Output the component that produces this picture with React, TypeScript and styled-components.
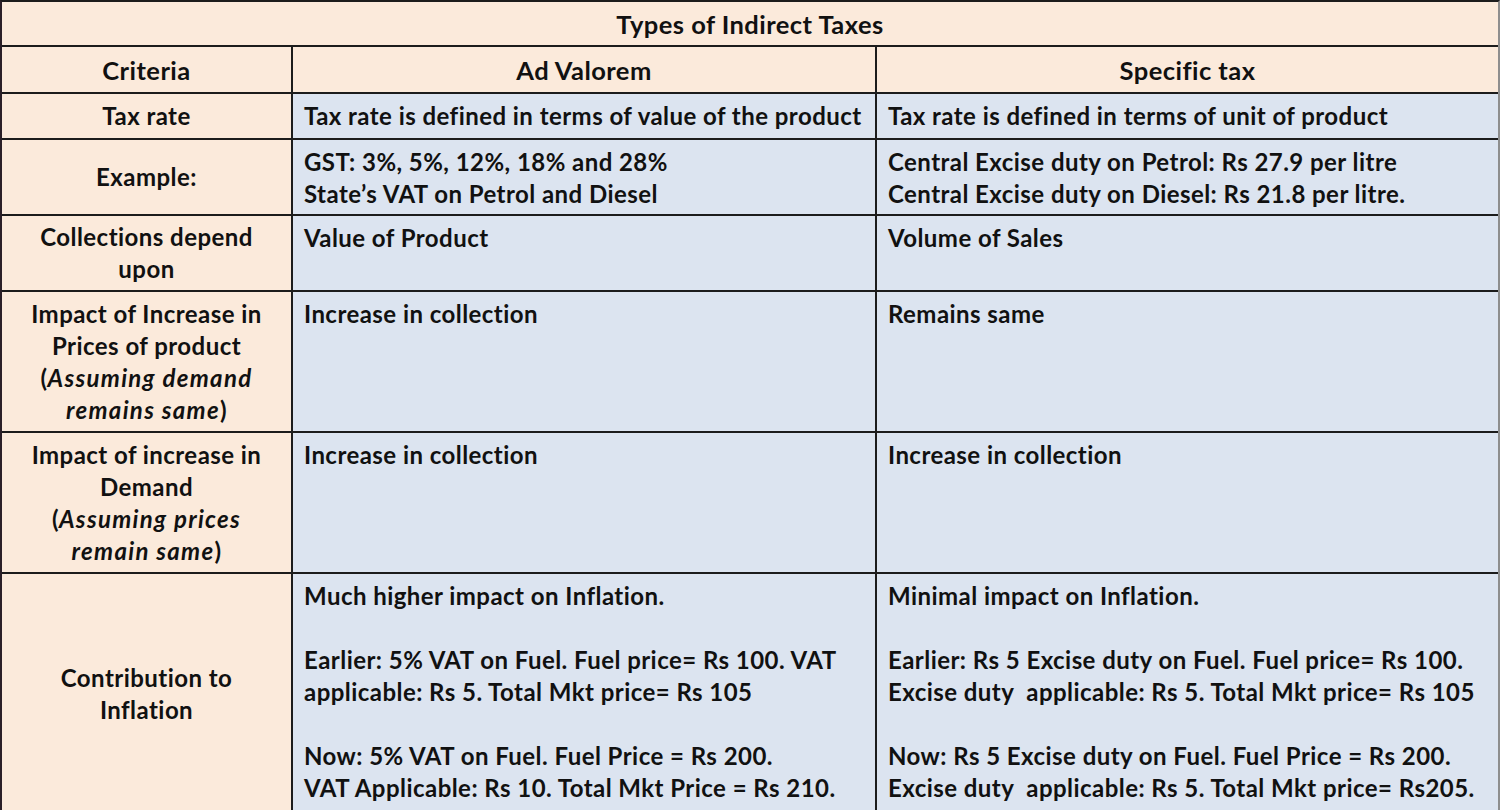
import React from "react";
import styled, { createGlobalStyle } from "styled-components";

const Global = createGlobalStyle`
  html, body { margin: 0; padding: 0; background: #ffffff; }
  body { width: 1500px; height: 810px; overflow: hidden; }
`;

const Table = styled.div`
  width: 1500px;
  box-sizing: border-box;
  display: grid;
  grid-template-columns: 289px 582px 1fr;
  grid-template-rows: 43px 45px 44px 74px 74px 139px 139px 240px;
  gap: 2px;
  background: #1c1c1c;
  border-top: 2px solid #1c1c1c;
  border-left: 2px solid #2a1f28;
  border-right: 2px solid #8e8e8e;
  font-family: Lato, "Open Sans", sans-serif;
  font-weight: 700;
  font-size: 24px;
  letter-spacing: 0.45px;
  line-height: 32px;
  color: #111111;
`;

const Title = styled.div`
  grid-column: 1 / span 3;
  background: #fbeadb;
  display: flex;
  align-items: center;
  justify-content: center;
  font-size: 25.5px;
`;

const HeadCell = styled.div`
  background: #fbeadb;
  display: flex;
  align-items: center;
  justify-content: center;
  padding-top: 1px;
  font-size: 25.5px;
`;

const CriteriaCell = styled.div`
  background: #fbeadb;
  display: flex;
  flex-direction: column;
  align-items: center;
  justify-content: center;
  text-align: center;
`;

const BodyCell = styled.div`
  background: #dce4f0;
  padding: 6px 11px;
  box-sizing: border-box;
`;

const Line = styled.div`
  white-space: pre;
  min-height: 32px;
`;

const Em = styled.em`
  font-style: italic;
  letter-spacing: 1.3px;
`;

type Row = {
  criteria: React.ReactNode[];
  adv: string[];
  spec: string[];
};

const rows: Row[] = [
  {
    criteria: ["Tax rate"],
    adv: ["Tax rate is defined in terms of value of the product"],
    spec: ["Tax rate is defined in terms of unit of product"],
  },
  {
    criteria: ["Example:"],
    adv: ["GST: 3%, 5%, 12%, 18% and 28%", "State’s VAT on Petrol and Diesel"],
    spec: [
      "Central Excise duty on Petrol: Rs 27.9 per litre",
      "Central Excise duty on Diesel: Rs 21.8 per litre.",
    ],
  },
  {
    criteria: ["Collections depend", "upon"],
    adv: ["Value of Product"],
    spec: ["Volume of Sales"],
  },
  {
    criteria: [
      "Impact of Increase in",
      "Prices of product",
      <>
        (<Em>Assuming demand</Em>
      </>,
      <>
        <Em>remains same</Em>)
      </>,
    ],
    adv: ["Increase in collection"],
    spec: ["Remains same"],
  },
  {
    criteria: [
      "Impact of increase in",
      "Demand",
      <>
        (<Em>Assuming prices</Em>
      </>,
      <>
        <Em>remain same</Em>)
      </>,
    ],
    adv: ["Increase in collection"],
    spec: ["Increase in collection"],
  },
  {
    criteria: ["Contribution to", "Inflation"],
    adv: [
      "Much higher impact on Inflation.",
      "",
      "Earlier: 5% VAT on Fuel. Fuel price= Rs 100. VAT",
      "applicable: Rs 5. Total Mkt price= Rs 105",
      "",
      "Now: 5% VAT on Fuel. Fuel Price = Rs 200.",
      "VAT Applicable: Rs 10. Total Mkt Price = Rs 210.",
    ],
    spec: [
      "Minimal impact on Inflation.",
      "",
      "Earlier: Rs 5 Excise duty on Fuel. Fuel price= Rs 100.",
      "Excise duty  applicable: Rs 5. Total Mkt price= Rs 105",
      "",
      "Now: Rs 5 Excise duty on Fuel. Fuel Price = Rs 200.",
      "Excise duty  applicable: Rs 5. Total Mkt price= Rs205.",
    ],
  },
];

export default function App() {
  return (
    <>
      <Global />
      <Table>
        <Title>Types of Indirect Taxes</Title>
        <HeadCell>Criteria</HeadCell>
        <HeadCell>Ad Valorem</HeadCell>
        <HeadCell>Specific tax</HeadCell>
        {rows.map((r, i) => (
          <React.Fragment key={i}>
            <CriteriaCell>
              {r.criteria.map((c, j) => (
                <Line key={j}>{c}</Line>
              ))}
            </CriteriaCell>
            <BodyCell>
              {r.adv.map((t, j) => (
                <Line key={j}>{t}</Line>
              ))}
            </BodyCell>
            <BodyCell>
              {r.spec.map((t, j) => (
                <Line key={j}>{t}</Line>
              ))}
            </BodyCell>
          </React.Fragment>
        ))}
      </Table>
    </>
  );
}
